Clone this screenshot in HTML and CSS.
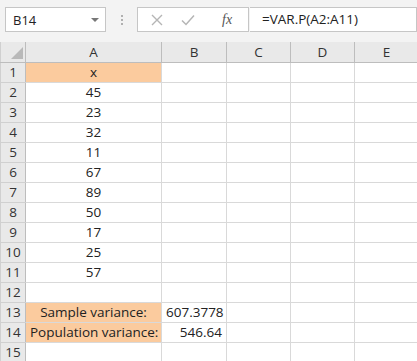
FILE: index.html
```html
<!DOCTYPE html>
<html lang="en">
<head>
    <meta charset="UTF-8">
    <title>VAR.P</title>
    <link rel="stylesheet" href="styles.css">
</head>
<body>
    <div class="formula-bar">
        <div class="name-box">
            <span>B14</span>
            <span class="drop"></span>
        </div>
        <div class="grip"><i></i><i></i><i></i></div>
        <div class="buttons">
            <svg class="btn" width="14" height="14" viewBox="0 0 14 14"><path d="M2 2 L12 12 M12 2 L2 12" stroke="#b5b5b5" stroke-width="1.4" fill="none"/></svg>
            <svg class="btn" width="16" height="14" viewBox="0 0 16 14"><path d="M2 7.5 L6 11.5 L14 2.5" stroke="#b5b5b5" stroke-width="1.5" fill="none"/></svg>
            <span class="fx">fx</span>
        </div>
        <div class="formula">=VAR.P(A2:A11)</div>
    </div>
    <table class="sheet">
        <colgroup>
            <col class="c-head">
            <col class="c-a">
            <col class="c-b">
            <col class="c-n">
            <col class="c-n">
            <col class="c-n">
        </colgroup>
        <tr class="col-heads">
            <th class="corner"><span class="tri"></span></th>
            <th>A</th><th>B</th><th>C</th><th>D</th><th>E</th>
        </tr>
        <tr><th>1</th><td class="hl mid">x</td><td></td><td></td><td></td><td></td></tr>
        <tr><th>2</th><td class="mid">45</td><td></td><td></td><td></td><td></td></tr>
        <tr><th>3</th><td class="mid">23</td><td></td><td></td><td></td><td></td></tr>
        <tr><th>4</th><td class="mid">32</td><td></td><td></td><td></td><td></td></tr>
        <tr><th>5</th><td class="mid">11</td><td></td><td></td><td></td><td></td></tr>
        <tr><th>6</th><td class="mid">67</td><td></td><td></td><td></td><td></td></tr>
        <tr><th>7</th><td class="mid">89</td><td></td><td></td><td></td><td></td></tr>
        <tr><th>8</th><td class="mid">50</td><td></td><td></td><td></td><td></td></tr>
        <tr><th>9</th><td class="mid">17</td><td></td><td></td><td></td><td></td></tr>
        <tr><th>10</th><td class="mid">25</td><td></td><td></td><td></td><td></td></tr>
        <tr><th>11</th><td class="mid">57</td><td></td><td></td><td></td><td></td></tr>
        <tr><th>12</th><td></td><td></td><td></td><td></td><td></td></tr>
        <tr><th>13</th><td class="hl mid">Sample variance:</td><td class="num">607.3778</td><td></td><td></td><td></td></tr>
        <tr><th>14</th><td class="hl mid">Population variance:</td><td class="num">546.64</td><td></td><td></td><td></td></tr>
        <tr><th>15</th><td></td><td></td><td></td><td></td><td></td></tr>
    </table>
</body>
</html>
```

FILE: styles.css
```css
body {
    margin: 0;
    background-color: #f3f3f3;
    font-family: 'Open Sans', 'Liberation Sans', sans-serif;
    color: #222;
    overflow: hidden;
}
.formula-bar {
    display: flex;
    align-items: center;
    height: 42px;
    padding: 0 0 3px 5px;
    box-sizing: border-box;
}
.name-box {
    width: 101px;
    height: 25px;
    box-sizing: border-box;
    background-color: white;
    border: 1px solid #c6c6c6;
    display: flex;
    align-items: center;
    justify-content: space-between;
    padding: 0 6px 0 7px;
    font-size: 13px;
}
.drop {
    width: 0;
    height: 0;
    border-left: 4px solid transparent;
    border-right: 4px solid transparent;
    border-top: 4px solid #777;
}
.grip {
    width: 31px;
    display: flex;
    flex-direction: column;
    align-items: center;
    gap: 2px;
}
.grip i {
    width: 2px;
    height: 2px;
    background-color: #b0b0b0;
}
.buttons {
    width: 112px;
    height: 25px;
    box-sizing: border-box;
    background-color: white;
    border: 1px solid #c6c6c6;
    display: flex;
    align-items: center;
    padding-left: 12px;
    gap: 16px;
}
.fx {
    font-family: 'Liberation Serif', serif;
    font-style: italic;
    font-size: 14px;
    color: #555;
    margin-left: 10px;
}
.formula {
    flex: 1;
    height: 25px;
    box-sizing: border-box;
    background-color: white;
    border: 1px solid #c6c6c6;
    border-left: none;
    margin-left: 1px;
    padding-left: 12px;
    line-height: 23px;
    font-size: 13.5px;
}
.sheet {
    table-layout: fixed;
    border-collapse: collapse;
    width: 418px;
    background-color: white;
    font-size: 13.5px;
}
.c-head { width: 25px; }
.c-a { width: 136px; }
.c-b { width: 65px; }
.c-n { width: 64px; }
.sheet tr { height: 20px; }
.sheet th, .sheet td {
    height: 20px;
    padding: 0 4px;
    box-sizing: border-box;
    white-space: nowrap;
    overflow: hidden;
    border: 1px solid #d9d9d9;
}
.sheet th {
    background-color: #e9e9e9;
    font-weight: normal;
    color: #333;
    border-color: #d0d0d0;
    border-right-color: #bdbdbd;
    text-align: center;
    padding: 0;
}
.col-heads th {
    border-bottom-color: #bdbdbd;
    border-top: none;
}
.corner {
    position: relative;
}
.tri {
    position: absolute;
    right: 2px;
    bottom: 3px;
    width: 0;
    height: 0;
    border-left: 12px solid transparent;
    border-bottom: 12px solid #b9b9b9;
}
.mid { text-align: center; }
.num { text-align: right; }
.hl {
    background-color: #fbcb9e;
    border: 1px solid #a89a8c;
}
```
